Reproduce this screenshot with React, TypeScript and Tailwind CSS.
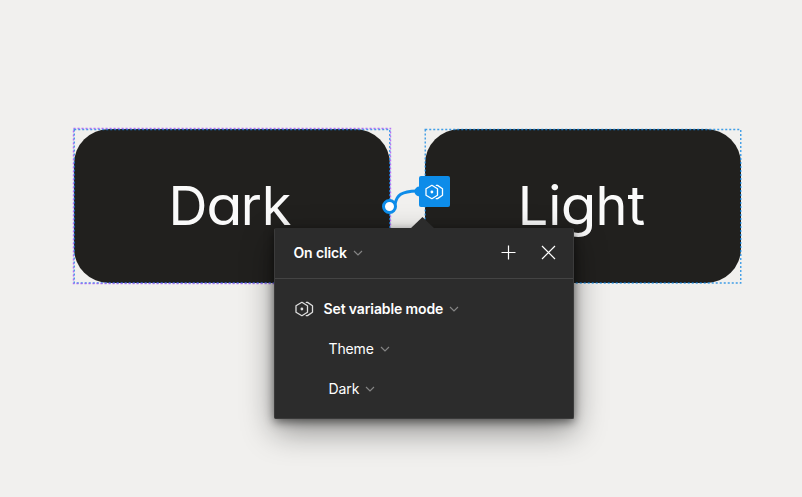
import React from "react";

function ModeIcon({ className }: { className: string }) {
  return (
    <svg className={className} width="19" height="16" viewBox="0 0 19 16" fill="none" stroke="currentColor" strokeWidth="1.3" strokeLinejoin="round" strokeLinecap="round">
      <path d="M1 4.8 6.9 1.3l5.6 3.5v6.4l-5.6 3.5L1 11.2Z" />
      <path d="m11.3 1.3 1.2.1 5 3.4v6.4l-5 3.4-1.2.1" />
      <circle cx="6.9" cy="8" r="1.4" fill="currentColor" stroke="none" />
    </svg>
  );
}

function Chevron() {
  return (
    <svg className="text-[#858585]" width="10" height="6" viewBox="0 0 10 6" fill="none" stroke="currentColor" strokeWidth="1.15">
      <path d="m1 1 4 4 4-4" />
    </svg>
  );
}

function Frame({ children, selected }: { children: React.ReactNode; selected?: boolean }) {
  return (
    <div className="relative h-[154px] w-[316px]">
      <div className="flex h-full items-center justify-center rounded-[35px] bg-[#21201e]">
        <span className="-ml-[4px] text-[54px] leading-none font-normal whitespace-nowrap text-[#fafafa] [font-feature-settings:'cv11']">{children}</span>
      </div>
      <svg className="absolute top-0 left-0 overflow-visible" width="316" height="154" fill="none">
        <rect x="0.25" y="0.5" width="315.5" height="153.5" stroke="#1388e4" strokeOpacity="0.8" strokeWidth="1.4" strokeDasharray="2 2" />
        {selected && <rect x="-0.5" y="-0.5" width="317" height="155" stroke="#a855f7" strokeOpacity="0.8" strokeWidth="1.4" strokeDasharray="2 2" />}
      </svg>
    </div>
  );
}

function Popover() {
  return (
    <div className="absolute top-[228px] left-[274px] h-[191px] w-[300px] rounded-[2px] border border-[#3b3b3b] border-t-[#2c2c2c] bg-[#2c2c2c] text-[14px] text-white shadow-[0_12px_32px_rgba(0,0,0,0.42),0_3px_10px_rgba(0,0,0,0.5)]">
      <svg className="absolute -top-[12px] left-[135px]" width="26" height="13">
        <path d="M0 12 12.5 0 25 12v1H0Z" fill="#2c2c2c" />
      </svg>
      <div className="flex h-[50px] items-center border-b border-[#444] pb-[2px] pl-[18.5px]">
        <span className="w-[54.5px] font-semibold tracking-[-0.15px] whitespace-nowrap">On click</span>
        <div className="ml-[5px]"><Chevron /></div>
        <svg className="ml-[138px]" width="15" height="15" stroke="white" strokeWidth="1.2"><path d="M7.5 .5v14M.5 7.5h14" /></svg>
        <svg className="ml-[25px]" width="15" height="15" stroke="white" strokeWidth="1.2"><path d="m1 1 13 13M14 1 1 14" /></svg>
      </div>
      <div className="flex flex-col pt-[9px]">
        <div className="flex h-10 items-center pl-[20px]">
          <div className="pt-[2px]"><ModeIcon className="text-[#dedede]" /></div>
          <span className="ml-[9.5px] w-[120.5px] font-semibold tracking-[-0.12px] whitespace-nowrap">Set variable mode</span>
          <div className="ml-[5px] pt-[2px]"><Chevron /></div>
        </div>
        <div className="flex h-10 items-center pl-[53.5px]">
          <span className="w-[46.5px] tracking-[-0.15px]">Theme</span>
          <div className="ml-[5px] pt-[2px]"><Chevron /></div>
        </div>
        <div className="flex h-10 items-center pl-[53.5px]">
          <span className="w-[31.5px] tracking-[-0.1px]">Dark</span>
          <div className="ml-[5px] pt-[2px]"><Chevron /></div>
        </div>
      </div>
    </div>
  );
}

export default function App() {
  return (
    <main className="relative h-[497px] w-[802px] overflow-hidden bg-[#f1f0ee] font-['Inter',sans-serif]">
      <div className="flex gap-[35.4px] pt-[129px] pl-[74px]">
        <Frame selected>D<span className="inline-block scale-x-110">a</span>rk</Frame>
        <Frame>Li<span className="mx-[0.5px] inline-block scale-x-108">g</span>ht</Frame>
      </div>
      <Popover />
      <svg className="absolute top-[180px] left-[380px]" width="44" height="36" fill="none" stroke="#0d8ce9">
        <path d="M15 24C17 15 21 11.5 37 11" strokeWidth="3" />
        <circle cx="39.5" cy="11.5" r="5" fill="#0d8ce9" stroke="none" />
        <circle cx="9.5" cy="26.5" r="6" fill="white" strokeWidth="3" />
      </svg>
      <div className="absolute top-[176px] left-[419px] flex h-[31px] w-[31px] items-center justify-center rounded-[2px] bg-[#0d8ce9]">
        <ModeIcon className="text-white" />
      </div>
    </main>
  );
}
